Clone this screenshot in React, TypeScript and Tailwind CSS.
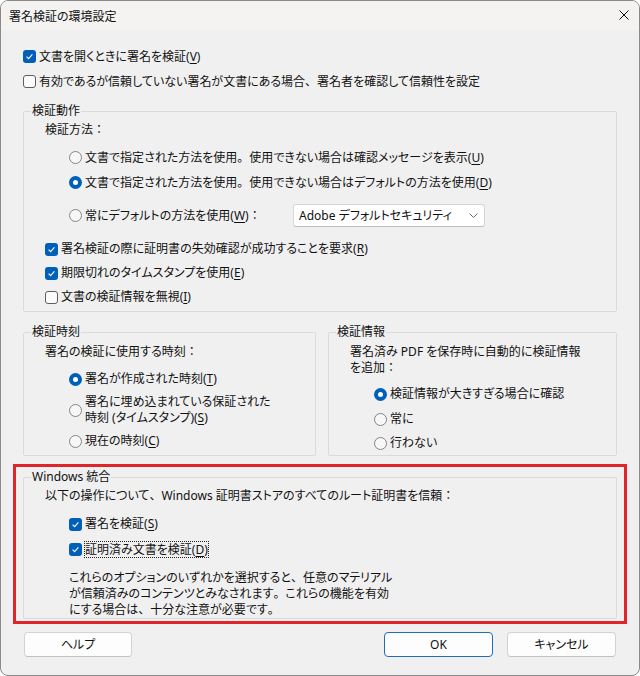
import React from "react";

const FONT = "[font-family:'Noto_Sans','Noto_Sans_CJK_JP',sans-serif] [font-feature-settings:'palt']";

function P({ c }: { c: string }) {
  return <span className="[font-feature-settings:normal]">{c}</span>;
}

function Check({ checked }: { checked: boolean }) {
  if (checked) {
    return (
      <span className="w-[13px] h-[13px] rounded-[3px] bg-[#005fb8] flex items-center justify-center shrink-0">
        <svg width="9" height="9" viewBox="0 0 9 9">
          <path d="M1.6 4.7 L3.6 6.7 L7.4 2.4" stroke="white" strokeWidth="1.1" fill="none" />
        </svg>
      </span>
    );
  }
  return <span className="w-[13px] h-[13px] rounded-[3px] border border-[#5e5e5e] bg-[#fbfbfb] shrink-0" />;
}

function Radio({ checked }: { checked: boolean }) {
  if (checked) {
    return (
      <span className="w-[13px] h-[13px] rounded-full bg-[#005fb8] flex items-center justify-center shrink-0">
        <span className="w-[5px] h-[5px] rounded-full bg-white" />
      </span>
    );
  }
  return <span className="w-[13px] h-[13px] rounded-full border border-[#858585] bg-[#f7f7f7] shrink-0" />;
}

function M({ k }: { k: string }) {
  return (
    <>
      (<span className="underline underline-offset-[2px]">{k}</span>)
    </>
  );
}

function Legend({ children }: { children: React.ReactNode }) {
  return <legend className="ml-[7px] px-[1px] leading-[16px]">{children}</legend>;
}

export default function App() {
  return (
    <div className={`w-[640px] h-[676px] bg-white text-[12px] text-[#111] whitespace-nowrap ${FONT}`}>
      <div className="relative w-full h-full flex flex-col border border-[#8a8a8a] rounded-[8px] overflow-hidden bg-[#f0f0f0]">
        {/* Title bar */}
        <div className="h-[29px] shrink-0 flex items-start justify-between bg-[#f4f3f2] pl-[8px] pr-[10px]">
          <div className="mt-[8px] leading-[16px]">署名検証の環境設定</div>
          <svg className="mt-[9px]" width="10" height="10" viewBox="0 0 10 10">
            <path d="M0.5 0.5 L9.5 9.5 M9.5 0.5 L0.5 9.5" stroke="#111" strokeWidth="1" />
          </svg>
        </div>

        {/* Body */}
        <div className="flex-1 flex flex-col px-[22px] pt-[14px]">
          <div className="h-[25px] flex items-center gap-[3px]">
            <Check checked />
            <span>文書を開くときに署名を検証<M k="V" /></span>
          </div>
          <div className="h-[25px] flex items-center gap-[3px]">
            <Check checked={false} />
            <span>
              有効であるが信頼していない署名が文書にある場合<P c="、" />署名者を確認して信頼性を設定
            </span>
          </div>

          {/* 検証動作 */}
          <fieldset className="mt-[9px] border border-[#dadada] rounded-[2px] min-w-0">
            <Legend>検証動作</Legend>
            <div className="pl-[21px] pb-[2px]">
              <div className="mt-[3px] h-[16px] leading-[16px]">
                検証方法<P c="：" />
              </div>
              <div className="ml-[24px] mt-[7px] h-[25px] flex items-center gap-[3px]">
                <Radio checked={false} />
                <span>
                  文書で指定された方法を使用<P c="。" />使用できない場合は確認メッセージを表示<M k="U" />
                </span>
              </div>
              <div className="ml-[24px] h-[25px] flex items-center gap-[3px]">
                <Radio checked />
                <span>
                  文書で指定された方法を使用<P c="。" />使用できない場合はデフォルトの方法を使用<M k="D" />
                </span>
              </div>
              <div className="ml-[24px] mt-[9px] h-[23px] flex items-center">
                <div className="w-[224px] flex items-center gap-[3px]">
                  <Radio checked={false} />
                  <span>
                    常にデフォルトの方法を使用<M k="W" />
                    <P c="：" />
                  </span>
                </div>
                <div className="w-[192px] h-[23px] bg-white border border-[#d6d6d6] border-b-[#bdbdbd] rounded-[3px] flex items-center justify-between pl-[5px] pr-[6px]">
                  <span>Adobe デフォルトセキュリティ</span>
                  <svg width="9" height="5" viewBox="0 0 9 5">
                    <path d="M0.5 0.5 L4.5 4.5 L8.5 0.5" stroke="#6a6a6a" strokeWidth="1" fill="none" />
                  </svg>
                </div>
              </div>
              <div className="mt-[10px] h-[24px] flex items-center gap-[3px]">
                <Check checked />
                <span>署名検証の際に証明書の失効確認が成功することを要求<M k="R" /></span>
              </div>
              <div className="h-[24px] flex items-center gap-[3px]">
                <Check checked />
                <span>期限切れのタイムスタンプを使用<M k="E" /></span>
              </div>
              <div className="h-[24px] flex items-center gap-[3px]">
                <Check checked={false} />
                <span>文書の検証情報を無視<M k="I" /></span>
              </div>
            </div>
          </fieldset>

          {/* 検証時刻 / 検証情報 */}
          <div className="mt-[12px] flex gap-[12px] items-stretch">
            <fieldset className="w-[293px] border border-[#dadada] rounded-[2px] min-w-0">
              <Legend>検証時刻</Legend>
              <div className="pl-[21px]">
                <div className="mt-[4px] h-[16px] leading-[16px]">
                  署名の検証に使用する時刻<P c="：" />
                </div>
                <div className="ml-[24px] mt-[7px] h-[24px] flex items-center gap-[3px]">
                  <Radio checked />
                  <span>署名が作成された時刻<M k="T" /></span>
                </div>
                <div className="ml-[24px] mt-[3px] flex items-center gap-[3px]">
                  <Radio checked={false} />
                  <div>
                    <div className="h-[16px] leading-[16px]">署名に埋め込まれている保証された</div>
                    <div className="h-[16px] leading-[16px]">
                      時刻 (タイムスタンプ)<M k="S" />
                    </div>
                  </div>
                </div>
                <div className="ml-[24px] mt-[3px] h-[24px] flex items-center gap-[3px]">
                  <Radio checked={false} />
                  <span>現在の時刻<M k="C" /></span>
                </div>
              </div>
            </fieldset>
            <fieldset className="flex-1 border border-[#dadada] rounded-[2px] min-w-0">
              <Legend>検証情報</Legend>
              <div className="pl-[21px]">
                <div className="mt-[4px]">
                  <div className="h-[16px] leading-[16px]">署名済み PDF を保存時に自動的に検証情報</div>
                  <div className="h-[16px] leading-[16px]">
                    を追加<P c="：" />
                  </div>
                </div>
                <div className="ml-[24px] mt-[6px] h-[24px] flex items-center gap-[3px]">
                  <Radio checked />
                  <span>検証情報が大きすぎる場合に確認</span>
                </div>
                <div className="ml-[24px] mt-[1px] h-[24px] flex items-center gap-[3px]">
                  <Radio checked={false} />
                  <span>常に</span>
                </div>
                <div className="ml-[24px] h-[24px] flex items-center gap-[3px]">
                  <Radio checked={false} />
                  <span>行わない</span>
                </div>
              </div>
            </fieldset>
          </div>

          {/* Windows 統合 */}
          <fieldset className="mt-[13px] border border-[#dadada] rounded-[2px] min-w-0">
            <Legend>Windows 統合</Legend>
            <div className="pl-[21px]">
              <div className="mt-[3px] h-[16px] leading-[16px]">
                以下の操作について<P c="、" />Windows 証明書ストアのすべてのルート証明書を信頼<P c="：" />
              </div>
              <div className="ml-[24px] mt-[8px] h-[24px] flex items-center gap-[3px]">
                <Check checked />
                <span>署名を検証<M k="S" /></span>
              </div>
              <div className="ml-[24px] mt-[1px] h-[24px] flex items-center gap-[2px]">
                <Check checked />
                <span className="border border-dotted border-[#222] leading-[15px]">
                  証明済み文書を検証<M k="D" />
                </span>
              </div>
              <div className="ml-[24px] mt-[9px]">
                <div className="h-[16px] leading-[16px]">
                  これらのオプションのいずれかを選択すると<P c="、" />任意のマテリアル
                </div>
                <div className="h-[16px] leading-[16px]">
                  が信頼済みのコンテンツとみなされます<P c="。" />これらの機能を有効
                </div>
                <div className="h-[16px] leading-[16px]">
                  にする場合は<P c="、" />十分な注意が必要です<P c="。" />
                </div>
              </div>
            </div>
          </fieldset>

          {/* Buttons */}
          <div className="mt-[13px] flex justify-between">
            <button className="ml-[1px] w-[108px] h-[25px] bg-[#fdfdfd] border border-[#d3d3d3] border-b-[#c2c2c2] rounded-[4px]">
              ヘルプ
            </button>
            <div className="mr-[1px] flex gap-[14px]">
              <button className="w-[109px] h-[25px] bg-[#fdfdfd] border border-[#1f6fb8] rounded-[4px]">
                OK
              </button>
              <button className="w-[109px] h-[25px] bg-[#fdfdfd] border border-[#d3d3d3] border-b-[#c2c2c2] rounded-[4px]">
                キャンセル
              </button>
            </div>
          </div>
        </div>

        {/* red annotation overlay */}
        <div className="absolute left-[12px] top-[463px] w-[614px] h-[160px] border-[3px] border-[#e0242a] pointer-events-none" />
      </div>
    </div>
  );
}
